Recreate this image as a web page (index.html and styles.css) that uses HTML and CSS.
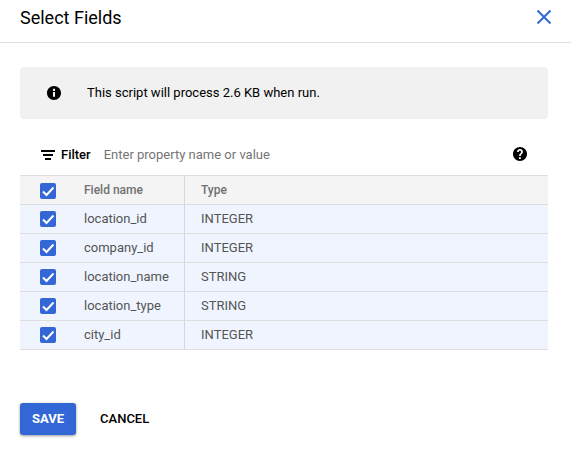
FILE: index.html
```html
<!DOCTYPE html>
<html lang="en">
<head>
<meta charset="utf-8">
<meta name="viewport" content="width=device-width, initial-scale=1">
<title>Select Fields</title>
<link rel="stylesheet" href="styles.css">
</head>
<body>
<header class="header">
  <h1 class="title">Select Fields</h1>
  <button class="close" type="button" aria-label="Close">
    <svg width="24" height="24" viewBox="0 0 24 24" aria-hidden="true"><path d="M5.5 5.5l13 13M18.500 5.500l-13 13" fill="none" stroke="currentColor" stroke-width="2"/></svg>
  </button>
</header>
<main class="content">
  <div class="notice">
    <svg width="14" height="14" viewBox="2 2 20 20" aria-hidden="true"><path fill="currentColor" d="M12 2C6.480 2 2 6.480 2 12s4.480 10 10 10 10-4.480 10-10S17.520 2 12 2zm1.500 15.500h-3v-7h3v7zm0-8.500h-3V6h3v3z"/></svg>
    <p class="notice-text">This script will process 2.6 KB when run.</p>
  </div>
  <div class="filter">
    <svg width="14" height="10" viewBox="0 0 14 10" aria-hidden="true"><path fill="currentColor" d="M0 0h14v2H0zM2 4h10v2H2zM4 8h6v2H4z"/></svg>
    <label class="filter-label" for="filter">Filter</label>
    <input class="filter-input" id="filter" type="text" placeholder="Enter property name or value">
    <button class="help" type="button" aria-label="Help">
      <svg width="14" height="14" viewBox="2 2 20 20" aria-hidden="true"><path fill="currentColor" stroke="none" d="M12 2C6.480 2 2 6.480 2 12s4.480 10 10 10 10-4.480 10-10S17.520 2 12 2zm1.200 17h-2.600v-2.400h2.600v2.400zm2.070-7.750l-.9.920C13.650 12.900 13.200 13.500 13.200 15h-2.600v-.5c0-1.100.65-2.100 1.170-2.830l1.240-1.260c.37-.36.59-.86.59-1.410 0-1.100-.7-1.700-1.700-1.700s-1.700.6-1.700 1.700H7.700c0-2.210 1.890-4.200 4.200-4.200s4.300 1.790 4.300 4.200c0 .88-.36 1.680-.93 2.250z"/></svg>
    </button>
  </div>
  <table class="fields">
    <thead>
      <tr><th class="pick"><input class="check" type="checkbox" aria-label="Select all" checked></th><th class="name" scope="col">Field name</th><th class="type" scope="col">Type</th></tr>
    </thead>
    <tbody>
      <tr><td class="pick"><input class="check" type="checkbox" id="f1" checked></td><td class="name"><label for="f1">location_id</label></td><td class="type">INTEGER</td></tr>
      <tr><td class="pick"><input class="check" type="checkbox" id="f2" checked></td><td class="name"><label for="f2">company_id</label></td><td class="type">INTEGER</td></tr>
      <tr><td class="pick"><input class="check" type="checkbox" id="f3" checked></td><td class="name"><label for="f3">location_name</label></td><td class="type">STRING</td></tr>
      <tr><td class="pick"><input class="check" type="checkbox" id="f4" checked></td><td class="name"><label for="f4">location_type</label></td><td class="type">STRING</td></tr>
      <tr><td class="pick"><input class="check" type="checkbox" id="f5" checked></td><td class="name"><label for="f5">city_id</label></td><td class="type">INTEGER</td></tr>
    </tbody>
  </table>
  <div class="actions">
    <button class="button save" type="button">SAVE</button>
    <button class="button cancel" type="button">CANCEL</button>
  </div>
</main>
</body>
</html>
```
FILE: styles.css
```css
* { box-sizing: border-box; }

body {
  margin: 0;
  background: #fff;
  color: #000;
  font: 13px/20px Roboto, "Liberation Sans", sans-serif;
}

svg { display: block; flex: none; }

button {
  padding: 0;
  border: 0;
  background: none;
  color: inherit;
  font: inherit;
  cursor: pointer;
}

.header {
  display: flex;
  align-items: flex-start;
  justify-content: space-between;
  padding: 5px 15px 11px 20px;
  border-bottom: 1px solid #e0e0e0;
}

.title {
  margin: 0;
  font-size: 18px;
  font-weight: 400;
  line-height: 26px;
}

.close { color: #3367d6; }

.content { padding: 24px 23px 24px 20px; }

.notice {
  display: flex;
  align-items: center;
  gap: 26px;
  padding: 16px 27px;
  border-radius: 4px;
  background: #f1f1f1;
}

.notice-text { margin: 0; }

.filter {
  display: flex;
  align-items: center;
  padding: 26px 21px 10px;
}

.filter-label {
  margin: 0 13px 0 6px;
  font-weight: 500;
}

.filter-input {
  flex: 1;
  min-width: 0;
  height: 20px;
  padding: 0;
  border: 0;
  outline: 0;
  background: none;
  color: #212121;
  font: inherit;
}

.filter-input::placeholder { color: #757575; opacity: 1; }

.help { padding-bottom: 2px; }

.fields {
  width: 100%;
  border-spacing: 0;
  border-top: 1px solid #dedede;
  table-layout: fixed;
  color: #545454;
  text-align: left;
}

.fields th,
.fields td {
  height: 29px;
  padding: 0;
  border-bottom: 1px solid #dedede;
  background: #f0f4ff;
}

.fields th {
  background: #f4f4f4;
  color: #707070;
  font-size: 12px;
  font-weight: 500;
}

.fields .pick { width: 64px; padding-left: 20px; }
.fields th.pick { padding-top: 2px; }
.fields .name { width: 100px; }
.fields .type { padding-left: 16px; border-left: 1px solid #d3d7de; }

.check {
  display: block;
  width: 16px;
  height: 16px;
  margin: 0;
  border-radius: 2px;
  appearance: none;
  border: 2px solid #757575;
}

.check:checked {
  border: 0;
  background: #3367d6 url("data:image/svg+xml,%3Csvg xmlns='http://www.w3.org/2000/svg' viewBox='0 0 16 16'%3E%3Cpath d='M3 8.500L6.500 12L13.500 4.500' fill='none' stroke='white' stroke-width='2'/%3E%3C/svg%3E");
}

.actions {
  display: flex;
  gap: 8px;
  margin-top: 53px;
}

.button {
  padding: 6px 12px;
  border-radius: 3px;
  font-weight: 500;
}

.cancel { padding: 6px 16px; }

.save {
  background: #3367d6;
  color: #fff;
  font-weight: 700;
  box-shadow: 0 1px 3px rgba(0, 0, 0, 0.4);
}
```
